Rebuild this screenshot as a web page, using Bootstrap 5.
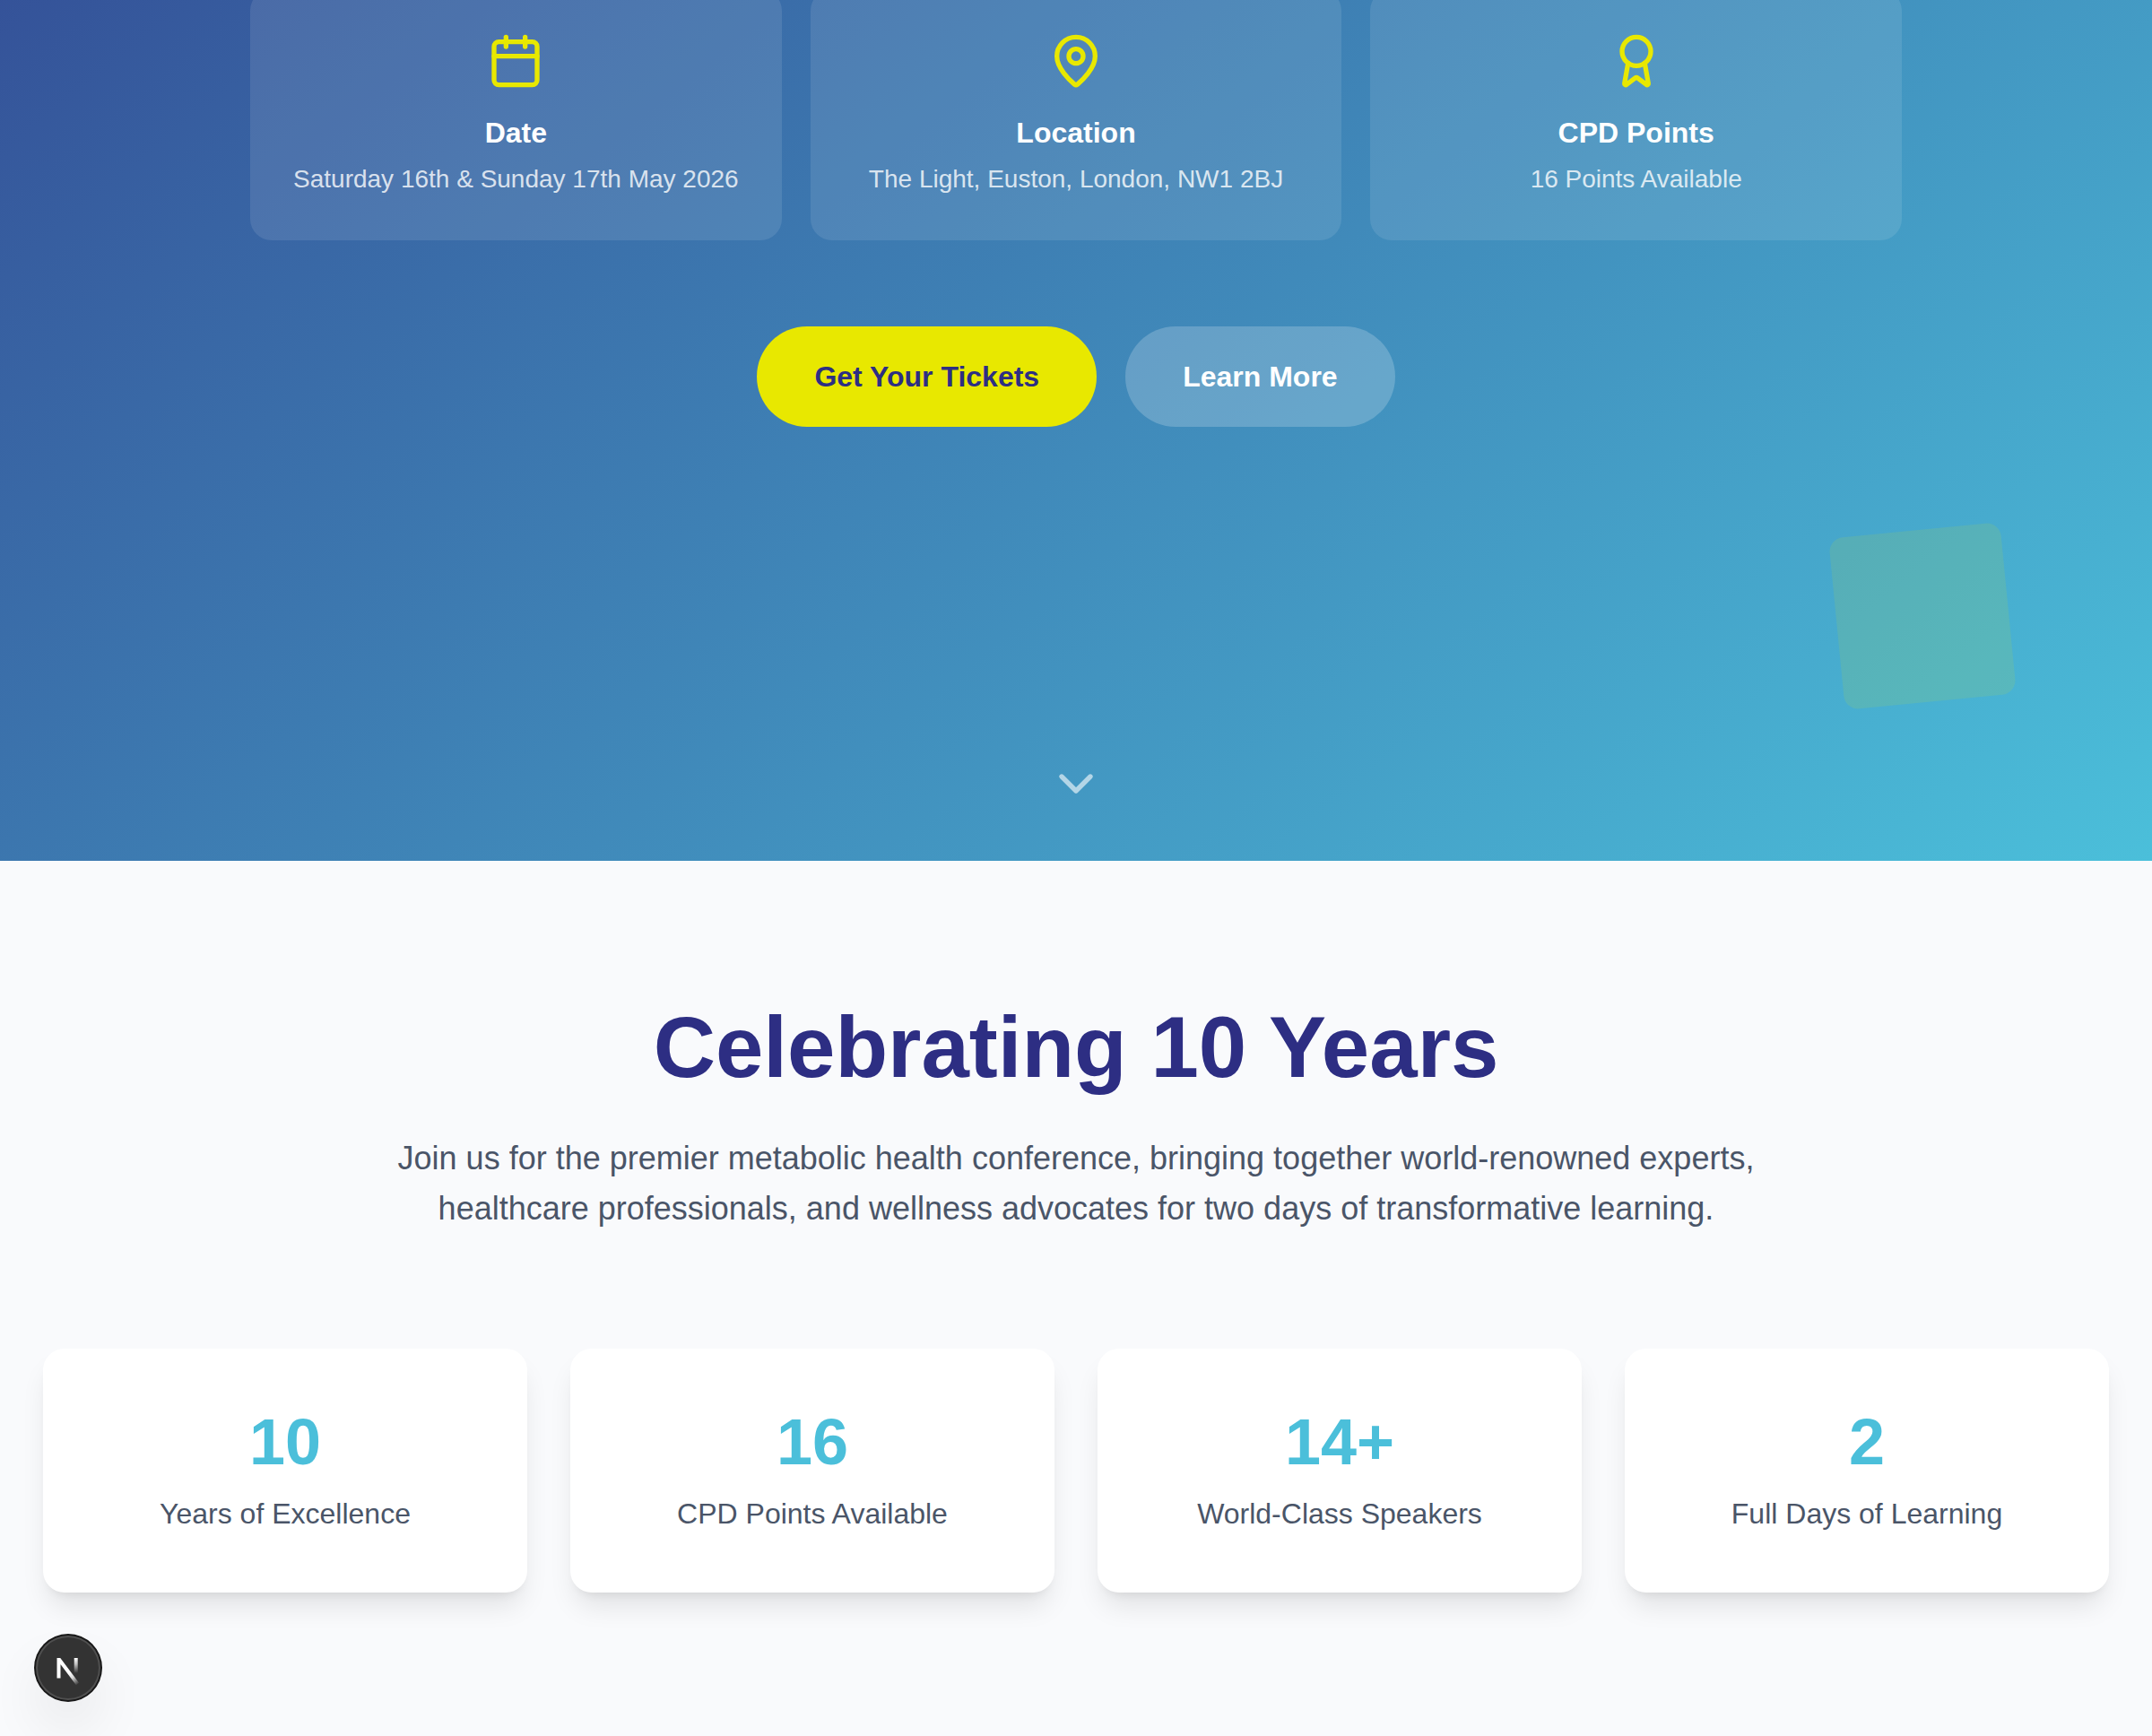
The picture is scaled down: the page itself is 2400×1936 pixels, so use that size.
<!DOCTYPE html>
<html lang="en">
<head>
<meta charset="utf-8">
<meta name="viewport" content="width=device-width, initial-scale=1">
<title>Celebrating 10 Years</title>
<link href="https://cdn.jsdelivr.net/npm/bootstrap@5.3.0/dist/css/bootstrap.min.css" rel="stylesheet">
<style>
  :root { --navy: #2d2e83; --aqua: #4bbfda; --lime: #e8e800; --slate: #4a5568; }
  body { font-family: "Liberation Sans", Arial, sans-serif; background: #f9fafc; color: var(--slate); font-size: 32px; line-height: 48px; }
  .hero { background: linear-gradient(to bottom right, var(--navy), var(--aqua)) left bottom / 100% 1936px no-repeat; padding: 0 48px 54px; }
  .info-grid { max-width: 1842px; gap: 32px; margin: -12px auto 0; }
  .info-tile { flex: 1 1 0; padding: 48px; border-radius: 24px; background: rgba(255, 255, 255, .1); }
  .info-tile svg { color: var(--lime); margin-bottom: 24px; }
  .info-tile h3 { font-size: 32px; line-height: 48px; font-weight: 700; margin-bottom: 8px; }
  .info-tile p { font-size: 28px; line-height: 40px; color: rgba(255, 255, 255, .8); }
  .line-icon { width: 64px; height: 64px; fill: none; stroke: currentColor; stroke-width: 2; stroke-linecap: round; stroke-linejoin: round; }
  .cta-row { gap: 32px; margin-top: 96px; }
  .cta { --bs-btn-font-size: 32px; --bs-btn-line-height: 48px; --bs-btn-padding-x: 64px; --bs-btn-padding-y: 32px; --bs-btn-border-width: 0; --bs-btn-font-weight: 700; }
  .cta-main { --bs-btn-bg: var(--lime); --bs-btn-color: var(--navy); --bs-btn-hover-bg: #f4f440; --bs-btn-hover-color: var(--navy); }
  .cta-soft { --bs-btn-bg: rgba(255, 255, 255, .2); --bs-btn-color: #fff; --bs-btn-hover-bg: rgba(255, 255, 255, .3); --bs-btn-hover-color: #fff; }
  .scroll-cue { margin-top: 366px; color: rgba(255, 255, 255, .6); }
  .hero-square { right: 160px; bottom: 177px; width: 192px; height: 192px; border-radius: 16px; background: var(--lime); opacity: .1; transform: rotate(-5.6deg); }
  .about { padding: 160px 48px; }
  .about h2 { font-size: 96px; line-height: 96px; font-weight: 700; color: var(--navy); margin-bottom: 48px; }
  .intro { font-size: 36px; line-height: 56px; max-width: 1536px; margin: 0 auto 128px; }
  .stats { --bs-gutter-x: 48px; --bs-gutter-y: 48px; }
  .stat-tile { padding: 64px; border-radius: 24px; box-shadow: 0 20px 30px -6px rgba(0, 0, 0, .1), 0 8px 12px -8px rgba(0, 0, 0, .1); }
  .stat-value { font-size: 72px; line-height: 80px; font-weight: 700; color: var(--aqua); margin-bottom: 16px; }
  .dev-badge { left: 40px; bottom: 40px; width: 72px; height: 72px; background: #333; box-shadow: 0 0 0 2px #171717, inset 0 0 0 2px rgba(255, 255, 255, .14), 0 32px 64px -8px rgba(0, 0, 0, .12); }
</style>
</head>
<body>
<header class="hero position-relative overflow-hidden text-center text-white">
  <div class="hero-square position-absolute"></div>
  <div class="info-grid d-flex position-relative">
    <div class="info-tile">
      <svg class="line-icon d-block mx-auto" viewBox="0 0 24 24" aria-hidden="true"><path d="M8 2v4M16 2v4"/><rect width="18" height="18" x="3" y="4" rx="2"/><path d="M3 10h18"/></svg>
      <h3>Date</h3>
      <p class="mb-0">Saturday 16th &amp; Sunday 17th May 2026</p>
    </div>
    <div class="info-tile">
      <svg class="line-icon d-block mx-auto" viewBox="0 0 24 24" aria-hidden="true"><path d="M20 10c0 4.993-5.539 10.193-7.399 11.799a1 1 0 0 1-1.202 0C9.539 20.193 4 14.993 4 10a8 8 0 0 1 16 0"/><circle cx="12" cy="10" r="3"/></svg>
      <h3>Location</h3>
      <p class="mb-0">The Light, Euston, London, NW1 2BJ</p>
    </div>
    <div class="info-tile">
      <svg class="line-icon d-block mx-auto" viewBox="0 0 24 24" aria-hidden="true"><path d="m15.477 12.89 1.515 8.526a.5.5 0 0 1-.81.47l-3.58-2.687a1 1 0 0 0-1.197 0l-3.586 2.686a.5.5 0 0 1-.81-.469l1.514-8.526"/><circle cx="12" cy="8" r="6"/></svg>
      <h3>CPD Points</h3>
      <p class="mb-0">16 Points Available</p>
    </div>
  </div>
  <div class="cta-row d-flex justify-content-center position-relative">
    <button type="button" class="btn cta cta-main rounded-pill">Get Your Tickets</button>
    <button type="button" class="btn cta cta-soft rounded-pill">Learn More</button>
  </div>
  <svg class="line-icon scroll-cue d-block mx-auto" viewBox="0 0 24 24" aria-hidden="true"><path d="m6 9 6 6 6-6"/></svg>
</header>

<main class="about text-center">
  <h2>Celebrating 10 Years</h2>
  <p class="intro">Join us for the premier metabolic health conference, bringing together world-renowned experts, healthcare professionals, and wellness advocates for two days of transformative learning.</p>
  <div class="row row-cols-1 row-cols-md-2 row-cols-lg-4 stats mt-0">
    <div class="col mt-0"><div class="stat-tile bg-white"><div class="stat-value">10</div><div>Years of Excellence</div></div></div>
    <div class="col mt-0"><div class="stat-tile bg-white"><div class="stat-value">16</div><div>CPD Points Available</div></div></div>
    <div class="col mt-0"><div class="stat-tile bg-white"><div class="stat-value">14+</div><div>World-Class Speakers</div></div></div>
    <div class="col mt-0"><div class="stat-tile bg-white"><div class="stat-value">2</div><div>Full Days of Learning</div></div></div>
  </div>
</main>

<button type="button" class="dev-badge position-fixed rounded-circle border-0 p-0 d-block" aria-label="Open developer tools">
  <svg class="d-block" width="72" height="72" viewBox="0 0 72 72" fill="none" stroke-width="4" aria-hidden="true">
    <defs>
      <linearGradient id="fadeDiagonal" gradientUnits="userSpaceOnUse" x1="38" y1="41" x2="48" y2="54"><stop offset="0" stop-color="#fff"/><stop offset=".4" stop-color="#fff" stop-opacity=".8"/><stop offset="1" stop-color="#fff" stop-opacity="0"/></linearGradient>
      <linearGradient id="fadeStem" gradientUnits="userSpaceOnUse" x1="44" y1="25" x2="44" y2="42"><stop offset="0" stop-color="#fff"/><stop offset=".4" stop-color="#fff" stop-opacity=".7"/><stop offset="1" stop-color="#fff" stop-opacity="0"/></linearGradient>
      <clipPath id="flatTop"><path d="M20 25h32v30H20z"/></clipPath>
    </defs>
    <g clip-path="url(#flatTop)">
      <path d="M46.5 54 25.5 26V47.5" stroke="url(#fadeDiagonal)"/>
      <path d="M44.7 25V43" stroke="url(#fadeStem)"/>
    </g>
  </svg>
</button>
<script src="https://cdn.jsdelivr.net/npm/bootstrap@5.3.0/dist/js/bootstrap.bundle.min.js"></script>
</body>
</html>
